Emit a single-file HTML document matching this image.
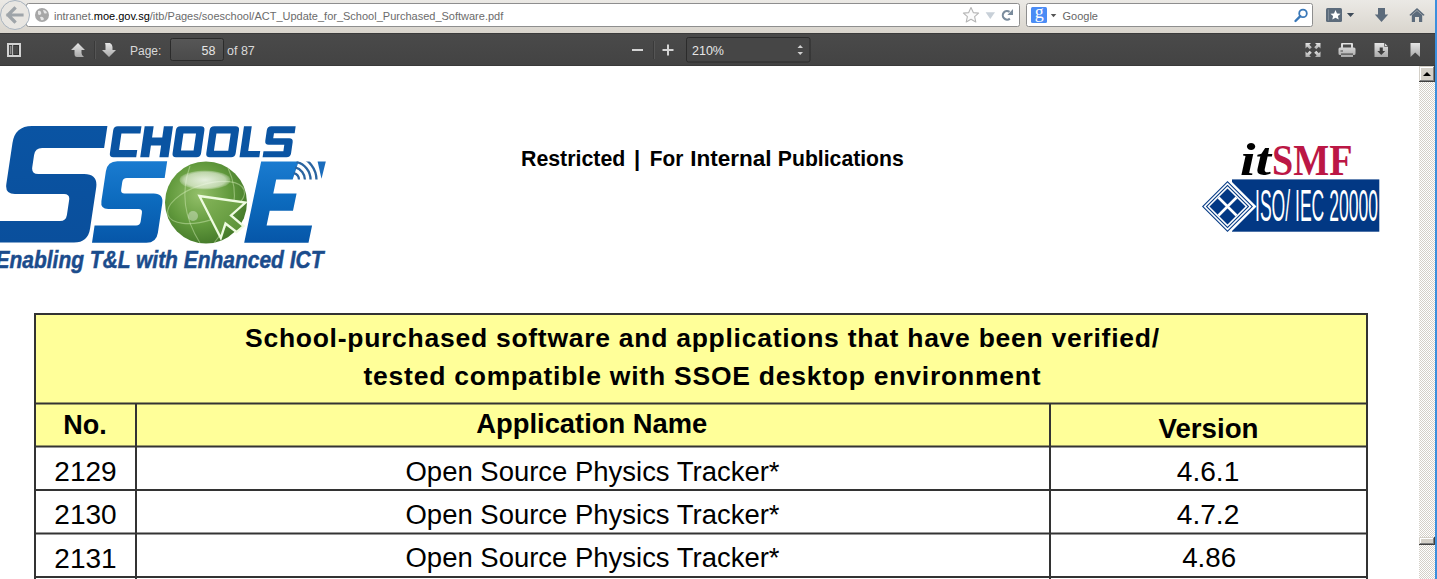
<!DOCTYPE html>
<html><head><meta charset="utf-8">
<style>
html,body{margin:0;padding:0;width:1437px;height:579px;overflow:hidden;background:#fff}
svg{display:block}
svg{font-family:"Liberation Sans",sans-serif}
</style></head>
<body>
<svg width="1437" height="579" viewBox="0 0 1437 579">
<defs>
  <linearGradient id="navg" x1="0" y1="0" x2="0" y2="1">
    <stop offset="0" stop-color="#ebe9e5"/><stop offset="1" stop-color="#d9d5cd"/>
  </linearGradient>
  <linearGradient id="tbg" x1="0" y1="0" x2="0" y2="1">
    <stop offset="0" stop-color="#4a4a4a"/><stop offset="1" stop-color="#434343"/>
  </linearGradient>
  <pattern id="chk" width="2" height="2" patternUnits="userSpaceOnUse">
    <rect width="2" height="2" fill="#ffffff"/>
    <rect width="1" height="1" fill="#d4d0c8"/><rect x="1" y="1" width="1" height="1" fill="#d4d0c8"/>
  </pattern>
</defs>

<!-- ===== NAV BAR ===== -->
<rect x="0" y="0" width="1437" height="33" fill="url(#navg)"/>

<!-- URL bar -->
<rect x="26.5" y="3.5" width="993" height="23" rx="2" fill="#fff" stroke="#8e8e8e"/>
<!-- back button -->
<circle cx="15" cy="15" r="14.5" fill="#e8e6e2" stroke="#a8b3bf"/>
<path d="M8 15 L14.5 8.5 M8 15 L14.5 21.5 M8 15 L22 15" stroke="#9ea4a9" stroke-width="3.2" stroke-linecap="square" fill="none"/>
<!-- globe -->
<circle cx="42" cy="15" r="7" fill="#a7a7a7"/>
<path d="M38 11 q2 -1 3 1 q1 2 -1 3 q-2 0 -2 -1z M43 10 q3 0 4 3 q-2 1 -3 0z M40 17 q3 -1 4 2 q-1 2 -3 1z" fill="#e6e6e6"/>
<text x="54" y="19.5" font-size="11" fill="#6b6b6b">intranet.<tspan fill="#000">moe.gov.sg</tspan>/itb/Pages/soeschool/ACT_Update_for_School_Purchased_Software.pdf</text>
<!-- star -->
<path d="M971 7.5 L973.3 12.6 L978.6 13.1 L974.6 16.7 L975.8 22 L971 19.2 L966.2 22 L967.4 16.7 L963.4 13.1 L968.7 12.6 Z" fill="#fbfbfb" stroke="#b6b6b6" stroke-width="1.1" stroke-linejoin="round"/>
<path d="M985.6 12.3 L995 12.3 L990.3 19 Z" fill="#c8d0d8"/>
<!-- reload -->
<path d="M1009.86 18.59 A4.3 4.3 0 1 1 1009.57 11.78" stroke="#7a8c9d" stroke-width="2.1" fill="none"/>
<path d="M1007.4 14.9 L1013 15.1 L1013 9 Z" fill="#7a8c9d"/>

<!-- search bar -->
<rect x="1026.5" y="3.5" width="286" height="23" rx="2" fill="#fff" stroke="#8e8e8e"/>
<rect x="1031" y="7" width="16" height="16" rx="1.5" fill="#4b8cf5"/>
<text x="1039.2" y="17.6" font-family="Liberation Serif" font-size="18" fill="#fff" text-anchor="middle">g</text>
<path d="M1050.8 14 L1056.3 14 L1053.5 17.2 Z" fill="#555"/>
<text x="1062.5" y="19.5" font-size="11" fill="#666">Google</text>
<circle cx="1303" cy="13.4" r="3.8" stroke="#3a78b8" stroke-width="1.8" fill="none"/>
<path d="M1300.3 16.2 L1295.5 21" stroke="#3a78b8" stroke-width="2.4" stroke-linecap="round"/>

<!-- bookmarks menu -->
<rect x="1326" y="8" width="16" height="14" rx="1.5" fill="#5c6b7b"/>
<rect x="1328" y="9.5" width="1" height="11" fill="#7d8a97"/>
<path d="M1335.5 10 L1337 13.4 L1340.6 13.7 L1337.9 16.1 L1338.7 19.6 L1335.5 17.7 L1332.3 19.6 L1333.1 16.1 L1330.4 13.7 L1334 13.4 Z" fill="#fff"/>
<path d="M1346.9 13 L1354.2 13 L1350.5 17.1 Z" fill="#3e4b59"/>
<!-- download -->
<path d="M1378 8 L1385 8 L1385 14.5 L1388.2 14.5 L1381.5 22.1 L1374.8 14.5 L1378 14.5 Z" fill="#5c6b7b"/>
<!-- home -->
<path d="M1417 8 L1424.7 15 L1423.2 15.8 L1417 10.3 L1410.8 15.8 L1409.3 15 Z" fill="#5c6b7b"/>
<path d="M1411.8 15 L1417 10.8 L1422.2 15 L1422.2 22 L1419 22 L1419 17 L1415 17 L1415 22 L1411.8 22 Z" fill="#5c6b7b"/>

<!-- ===== PDF TOOLBAR ===== -->
<rect x="0" y="33" width="1437" height="33" fill="url(#tbg)"/>
<rect x="0" y="33" width="1437" height="1" fill="#3b3b3b"/>
<rect x="0" y="65" width="1437" height="1" fill="#3a3a3a"/>

<linearGradient id="arrg" x1="0" y1="0" x2="0" y2="1"><stop offset="0" stop-color="#e6e6e6"/><stop offset="1" stop-color="#a9a9a9"/></linearGradient>
<!-- sidebar toggle -->
<rect x="7" y="43" width="14" height="14" fill="#d2d2d2"/>
<rect x="9" y="45" width="3.2" height="10" fill="#3a3a3a"/>
<rect x="9.8" y="45.8" width="1.6" height="8.4" fill="#8a8a8a"/>
<rect x="13.2" y="45" width="5.8" height="10" fill="#2f2f2f"/>
<rect x="14" y="45.8" width="4.2" height="8.4" fill="#484848"/>
<!-- up/down -->
<path d="M78 43 L85 50 L81.5 50 L81.5 53 Q81.5 55.5 84 57 L77 57 Q74.5 57 74.5 54 L74.5 50 L71 50 Z" fill="url(#arrg)"/>
<rect x="94" y="41" width="1" height="18" fill="#3a3a3a"/>
<rect x="95" y="41" width="1" height="18" fill="#555"/>
<path d="M109 57 L116 50 L112.5 50 L112.5 47 Q112.5 44.5 110 43 L105 43 Q105.5 44 105.5 46 L105.5 50 L102 50 Z" fill="url(#arrg)"/>
<text x="130" y="54.5" font-size="12" fill="#d9d9d9">Page:</text>
<linearGradient id="pbg" x1="0" y1="0" x2="0" y2="1"><stop offset="0" stop-color="#575757"/><stop offset="1" stop-color="#4a4a4a"/></linearGradient>
<rect x="170.5" y="38.5" width="53" height="22" rx="2" fill="url(#pbg)" stroke="#2b2b2b"/>
<text x="215.5" y="54.5" font-size="12.5" fill="#e6e6e6" text-anchor="end">58</text>
<text x="227" y="54.5" font-size="12.5" fill="#d9d9d9">of 87</text>
<!-- zoom -->
<rect x="632" y="49" width="11" height="2" fill="#d4d4d4"/>
<rect x="653" y="41" width="1" height="18" fill="#3a3a3a"/>
<rect x="654" y="41" width="1" height="18" fill="#555"/>
<rect x="662.5" y="49" width="11" height="2" fill="#d4d4d4"/>
<rect x="667" y="44.5" width="2" height="11" fill="#d4d4d4"/>
<rect x="686.5" y="37.5" width="123.5" height="24.5" rx="2" fill="#464646" stroke="#2b2b2b"/>
<text x="692" y="54.5" font-size="12.5" fill="#e6e6e6">210%</text>
<path d="M797.5 48 L803 48 L800.2 45 Z M797.5 52 L803 52 L800.2 55 Z" fill="#d0d0d0"/>
<!-- right tools -->
<g fill="url(#arrg)">
  <path d="M1305.5 43 L1311 43 L1309.3 44.7 L1311.8 47.2 L1309.7 49.3 L1307.2 46.8 L1305.5 48.5 Z"/>
  <path d="M1320.5 43 L1315 43 L1316.7 44.7 L1314.2 47.2 L1316.3 49.3 L1318.8 46.8 L1320.5 48.5 Z"/>
  <path d="M1305.5 57 L1311 57 L1309.3 55.3 L1311.8 52.8 L1309.7 50.7 L1307.2 53.2 L1305.5 51.5 Z"/>
  <path d="M1320.5 57 L1315 57 L1316.7 55.3 L1314.2 52.8 L1316.3 50.7 L1318.8 53.2 L1320.5 51.5 Z"/>
  <path d="M1342 43 L1352 43 Q1353 43 1353 44 L1353 47.5 L1354 47.5 Q1355.5 47.5 1355.5 49 L1355.5 53.5 Q1355.5 55 1354 55 L1353 55 L1353 57 L1341 57 L1341 55 L1340 55 Q1338.5 55 1338.5 53.5 L1338.5 49 Q1338.5 47.5 1340 47.5 L1341 47.5 L1341 44 Q1341 43 1342 43 Z"/>
  <path d="M1374.5 43 L1384.5 43 L1388 46.5 L1388 57 L1374.5 57 Z"/>
  <path d="M1410.5 43 L1420 43 L1420 57 L1415.2 52.5 L1410.5 57 Z"/>
</g>
<rect x="1343" y="44.5" width="8" height="3" fill="#4a4a4a"/>
<rect x="1341" y="53.5" width="12" height="1.2" fill="#4a4a4a"/>
<rect x="1340.5" y="50.5" width="2.5" height="1" fill="#4a4a4a"/>
<path d="M1384.5 43 L1384.5 46.5 L1388 46.5" fill="none" stroke="#5a5a5a" stroke-width="0.8"/>
<path d="M1379.7 47.5 L1382.8 47.5 L1382.8 51 L1385.2 51 L1381.25 55 L1377.3 51 L1379.7 51 Z" fill="#3e3e3e"/>
<!-- ===== CONTENT ===== -->
<rect x="0" y="66" width="1419" height="513" fill="#fff"/>
<!-- scrollbar -->
<rect x="1419" y="66" width="16" height="513" fill="url(#chk)"/>
<g>
  <rect x="1419" y="66" width="16" height="16" fill="#404040"/>
  <rect x="1419" y="66" width="15" height="15" fill="#d4d0c8"/>
  <rect x="1420" y="67" width="13" height="1" fill="#fff"/><rect x="1420" y="67" width="1" height="13" fill="#fff"/>
  <rect x="1420" y="80" width="14" height="1" fill="#808080"/><rect x="1433" y="67" width="1" height="14" fill="#808080"/>
  <path d="M1423 76 L1431 76 L1427 72 Z" fill="#000"/>
</g>
<g>
  <rect x="1419" y="537" width="16" height="8" fill="#404040"/>
  <rect x="1419" y="537" width="15" height="7" fill="#d4d0c8"/>
  <rect x="1420" y="538" width="13" height="1" fill="#fff"/><rect x="1420" y="538" width="1" height="5" fill="#fff"/>
  <rect x="1420" y="543" width="14" height="1" fill="#808080"/><rect x="1433" y="538" width="1" height="6" fill="#808080"/>
</g>
<!-- blue right strip -->
<rect x="1435" y="0" width="2" height="579" fill="#3b8fdd"/>

<!-- LOGO placeholder -->
<g id="logo">
  <defs>
    <linearGradient id="bsg" x1="0" y1="0" x2="0" y2="1">
      <stop offset="0" stop-color="#0a54a3"/><stop offset="1" stop-color="#0a4f9c"/>
    </linearGradient>
    <linearGradient id="ssg" x1="0" y1="0" x2="0" y2="1">
      <stop offset="0" stop-color="#1a7bd0"/><stop offset="0.5" stop-color="#0c6abd"/><stop offset="1" stop-color="#0656a8"/>
    </linearGradient>
    <radialGradient id="glb" cx="0.42" cy="0.4" r="0.62">
      <stop offset="0" stop-color="#94c06a"/><stop offset="0.6" stop-color="#629a3d"/><stop offset="1" stop-color="#457a2a"/>
    </radialGradient>
    <linearGradient id="cur" x1="0" y1="0" x2="1" y2="1">
      <stop offset="0" stop-color="#86b65a"/><stop offset="1" stop-color="#538c31"/>
    </linearGradient>
  </defs>
  <!-- big S -->
  <path transform="translate(0,242.5) skewX(-8.5) translate(0,-242.5)" fill="url(#bsg)"
   d="M14.6 126 L90 126 L90 148 L28 148 Q21 148 21 155 L21 167 Q21 174 28 174 L74 174 Q88 174 88 188 L88 228.5 Q88 242.5 74 242.5 L-10 242.5 L-10 221 L56.8 221 Q62.8 221 62.8 215 L62.8 200 Q62.8 194 56.8 194 L7.6 194 Q-2.4 194 -2.4 184 L-2.4 143 Q-2.4 126 14.6 126 Z"/>
  <!-- CHOOLS -->
  <g transform="translate(0,157.3) skewX(-8.2) translate(0,-157.3)" fill="#0a54a2">
    <path d="M113.3 126.2 L137 126.2 L137 133.6 L118 133.6 L118 150 L136.2 150 L136.2 157.3 L113.3 157.3 Q109.3 157.3 109.3 153.3 L109.3 130.2 Q109.3 126.2 113.3 126.2 Z"/>
    <path d="M140.2 126.2 L149.2 126.2 L149.2 137.4 L159.4 137.4 L159.4 126.2 L168.5 126.2 L168.5 157.3 L159.4 157.3 L159.4 145.4 L149.2 145.4 L149.2 157.3 L140.2 157.3 Z"/>
    <path fill-rule="evenodd" d="M176 126.2 L196.5 126.2 Q200.5 126.2 200.5 130.2 L200.5 153.3 Q200.5 157.3 196.5 157.3 L176 157.3 Q172 157.3 172 153.3 L172 130.2 Q172 126.2 176 126.2 Z M180 133.4 L180 150.6 L192.6 150.6 L192.6 133.4 Z"/>
    <path fill-rule="evenodd" d="M209.7 126.2 L231.1 126.2 Q235.1 126.2 235.1 130.2 L235.1 153.3 Q235.1 157.3 231.1 157.3 L209.7 157.3 Q205.7 157.3 205.7 153.3 L205.7 130.2 Q205.7 126.2 209.7 126.2 Z M213 133.4 L213 150.8 L227.3 150.8 L227.3 133.4 Z"/>
    <path d="M239.5 126.2 L247.3 126.2 L247.3 151 L259.3 151 L259.3 157.3 L239.5 157.3 Z"/>
    <path d="M266.9 126.2 L291.2 126.2 L291.2 133.2 L270.5 133.2 L270.5 138.3 L286.5 138.3 Q290.5 138.3 290.5 142.3 L290.5 153.3 Q290.5 157.3 286.5 157.3 L262.6 157.3 L262.6 151.2 L282.5 151.2 L282.5 144.8 L266.9 144.8 Q262.9 144.8 262.9 140.8 L262.9 130.2 Q262.9 126.2 266.9 126.2 Z"/>
  </g>
  <!-- small S -->
  <path transform="translate(0,242.7) skewX(-8.5) translate(0,-242.7)" fill="url(#ssg)"
   d="M105.2 161.2 L155 161.2 L155 178 L117.2 178 Q113.2 178 113.2 182 L113.2 189.5 Q113.2 193.5 117.2 193.5 L146.4 193.5 Q156.4 193.5 156.4 203.5 L156.4 232.7 Q156.4 242.7 146.4 242.7 L92 242.7 L92 225.5 L133.5 225.5 Q137.5 225.5 137.5 221.5 L137.5 213.1 Q137.5 209.1 133.5 209.1 L103.2 209.1 Q95.2 209.1 95.2 201.1 L95.2 171.2 Q95.2 161.2 105.2 161.2 Z"/>
  <!-- E -->
  <g transform="translate(0,242.7) skewX(-11.8) translate(0,-242.7)">
    <path fill="url(#ssg)" d="M244.2 161.6 L281.7 161.6 L279.5 179.6 L263 179.6 L263 193.5 L286.3 193.5 L286.3 210.7 L263 210.7 L263 225.5 L308.5 225.5 L308.5 242.7 L244.2 242.7 Z"/>
  </g>
  <clipPath id="wclip"><rect x="285" y="161.6" width="50" height="17.8"/></clipPath>
  <g clip-path="url(#wclip)" fill="none" stroke="#2a64a0" stroke-width="2.3">
    <path d="M293.69 173.21 A7 7 0 0 1 299.00 180"/>
    <path d="M295.14 167.39 A13 13 0 0 1 305.00 180"/>
    <path d="M296.50 161.95 A18.6 18.6 0 0 1 310.60 180"/>
    <path d="M297.93 156.23 A24.5 24.5 0 0 1 316.50 180"/>
  </g>
  <path d="M317.6 161.6 L325.8 161.6 L321.5 178.8 Z" fill="#1a6cbc"/>
  <!-- globe -->
  <circle cx="206" cy="202.5" r="41" fill="url(#glb)"/>
  <g fill="none" stroke="#d6efbb" stroke-opacity="0.45" stroke-width="1.1">
    <ellipse cx="206" cy="202.5" rx="40" ry="18" transform="rotate(-18 206 202.5)"/>
    <path d="M190 166 Q176 205 200 243"/>
    <path d="M228 168 Q246 206 214 243"/>
  </g>
  <radialGradient id="hlg" cx="0.5" cy="0.5" r="0.5"><stop offset="0" stop-color="#fff" stop-opacity="0.8"/><stop offset="0.8" stop-color="#f4f8ee" stop-opacity="0.6"/><stop offset="1" stop-color="#f4f8ee" stop-opacity="0.2"/></radialGradient>
  <ellipse cx="205" cy="180" rx="25.5" ry="9.5" fill="url(#hlg)"/>
  <circle cx="193" cy="216" r="5" fill="#fff" fill-opacity="0.35"/>
  <path d="M199.4 196 L245.5 202.5 L231 215.5 L243.5 226 L236.5 232 L225.5 223.5 L220.8 238 Z" fill="url(#cur)" stroke="#eefbe0" stroke-width="2.3" stroke-linejoin="miter"/>
  <!-- tagline -->
  <text x="-4.5" y="268" font-size="24" font-weight="bold" font-style="italic" fill="#1b4c8c" stroke="#1b4c8c" stroke-width="0.5" textLength="328" lengthAdjust="spacingAndGlyphs">Enabling T&amp;L with Enhanced ICT</text>
</g>

<!-- header text -->
<g font-size="22" font-weight="bold" fill="#000">
  <text x="521" y="165.8" textLength="104.3" lengthAdjust="spacingAndGlyphs">Restricted</text>
  <text x="633.9" y="165.8">|</text>
  <text x="649.8" y="165.8" textLength="33.5" lengthAdjust="spacingAndGlyphs">For</text>
  <text x="690.2" y="165.8" textLength="81.3" lengthAdjust="spacingAndGlyphs">Internal</text>
  <text x="777.8" y="165.8" textLength="126" lengthAdjust="spacingAndGlyphs">Publications</text>
</g>

<!-- itSMF placeholder -->
<g id="itsmf">
  <text x="1240" y="174.7" font-family="Liberation Serif" font-size="47" font-weight="bold" font-style="italic" fill="#000" textLength="31" lengthAdjust="spacingAndGlyphs">it</text>
  <text x="1272" y="174.7" font-family="Liberation Serif" font-size="44" font-weight="bold" fill="#bb1745" textLength="80.5" lengthAdjust="spacingAndGlyphs">SMF</text>
  <rect x="1232" y="179.4" width="147.3" height="52.3" fill="#023884"/>
  <path d="M1227.5 177.5 L1256.5 206.5 L1227.5 235.5 L1198.5 206.5 Z" fill="#fff"/>
  <path d="M1227.5 181.0 L1253.0 206.5 L1227.5 232.0 L1202.0 206.5 Z" fill="#023884"/>
  <path d="M1227.5 182.5 L1251.5 206.5 L1227.5 230.5 L1203.5 206.5 Z" fill="#fff"/>
  <path d="M1227.5 184.8 L1249.2 206.5 L1227.5 228.2 L1205.8 206.5 Z" fill="#023884"/>
  <path d="M1227.5 186.3 L1247.7 206.5 L1227.5 226.7 L1207.3 206.5 Z" fill="#fff"/>
  <path d="M1227.5 188.5 L1245.5 206.5 L1227.5 224.5 L1209.5 206.5 Z" fill="#023884"/>
  <path d="M1218.5 197.5 L1236.5 215.5 M1236.5 197.5 L1218.5 215.5" stroke="#fff" stroke-width="2.6"/>
  <text transform="translate(1255,221.2) scale(1,1.24)" x="0" y="0" font-size="35.5" fill="#fff" textLength="123" lengthAdjust="spacingAndGlyphs">ISO/ IEC 20000</text>
</g>

<!-- ===== TABLE ===== -->
<rect x="35" y="314" width="1332" height="133" fill="#ffff99"/>
<g fill="#333">
  <rect x="34" y="313" width="1334" height="2"/>
  <rect x="34" y="313" width="2" height="266"/>
  <rect x="1366" y="313" width="2" height="266"/>
  <rect x="34" y="402.5" width="1334" height="2"/>
  <rect x="34" y="445.5" width="1334" height="2"/>
  <rect x="34" y="489" width="1334" height="2"/>
  <rect x="34" y="532.5" width="1334" height="2"/>
  <rect x="34" y="576" width="1334" height="2"/>
  <rect x="135" y="403" width="2" height="176"/>
  <rect x="1049" y="403" width="2" height="176"/>
</g>
<g font-weight="bold" fill="#000">
  <text x="245" y="346.7" font-size="26.5" textLength="914" lengthAdjust="spacing">School-purchased software and applications that have been verified/</text>
  <text x="363.5" y="385" font-size="26.5" textLength="677" lengthAdjust="spacing">tested compatible with SSOE desktop environment</text>
  <text x="85" y="433.7" font-size="27" text-anchor="middle">No.</text>
  <text x="476.3" y="433.4" font-size="27" textLength="231" lengthAdjust="spacingAndGlyphs">Application Name</text>
  <text x="1158.5" y="437.7" font-size="27" textLength="100" lengthAdjust="spacingAndGlyphs">Version</text>
</g>
<g fill="#000" font-size="27">
  <text x="85.5" y="480.8" font-size="28" text-anchor="middle">2129</text>
  <text x="405.5" y="480.6" textLength="374" lengthAdjust="spacingAndGlyphs">Open Source Physics Tracker*</text>
  <text x="1176.8" y="481" textLength="62.5" lengthAdjust="spacingAndGlyphs">4.6.1</text>
  <text x="85.5" y="524.2" font-size="28" text-anchor="middle">2130</text>
  <text x="405.5" y="524" textLength="374" lengthAdjust="spacingAndGlyphs">Open Source Physics Tracker*</text>
  <text x="1176.8" y="523.7" textLength="62.5" lengthAdjust="spacingAndGlyphs">4.7.2</text>
  <text x="85.5" y="567.6" font-size="28" text-anchor="middle">2131</text>
  <text x="405.5" y="567.4" textLength="374" lengthAdjust="spacingAndGlyphs">Open Source Physics Tracker*</text>
  <text x="1182.2" y="567" textLength="54" lengthAdjust="spacingAndGlyphs">4.86</text>
</g>
</svg>
</body></html>
